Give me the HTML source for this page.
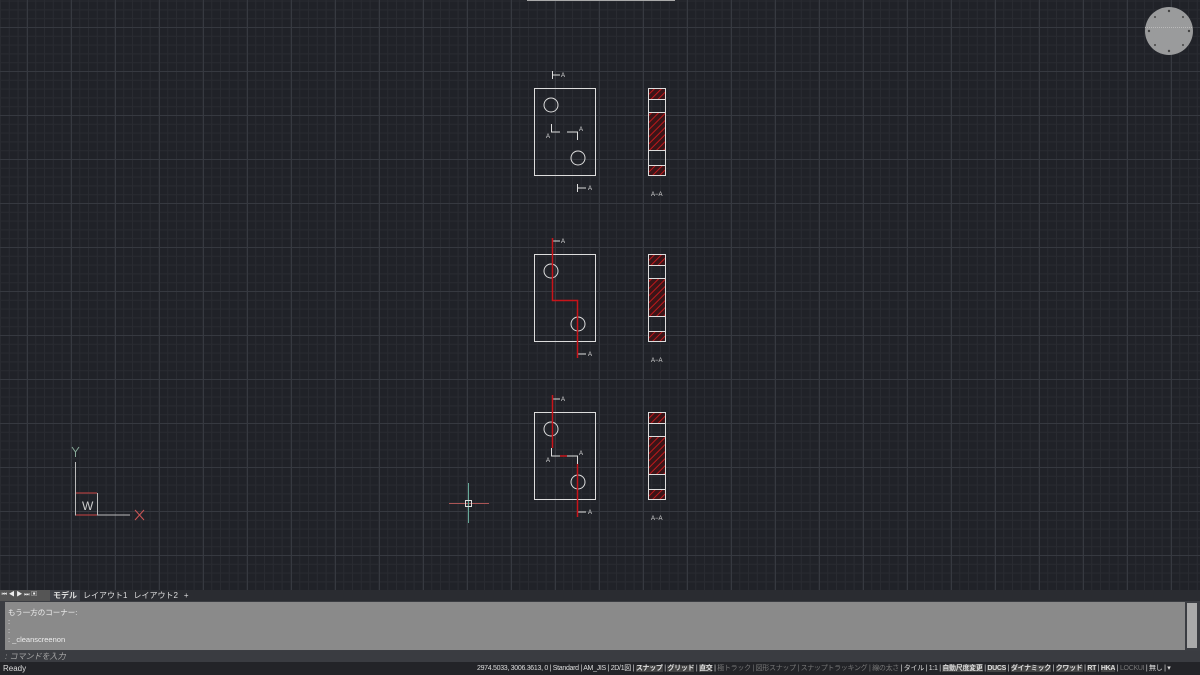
<!DOCTYPE html>
<html><head><meta charset="utf-8"><style>
body{margin:0;width:1200px;height:675px;overflow:hidden;background:#202228;font-family:"Liberation Sans","Noto Sans CJK JP",sans-serif}
.abs{position:absolute}
.tab{display:inline-block;padding:0 3px;height:11px}
</style></head><body>
<svg class="abs" style="left:0;top:0" width="1200" height="590">
<defs>
<pattern id="mn" x="0" y="27" width="8.8" height="8.8" patternUnits="userSpaceOnUse"><path d="M0 0.5H8.8M0.5 0V8.8" stroke="#292b31" stroke-width="1" fill="none"/></pattern>
<pattern id="mj" x="27" y="27" width="44" height="44" patternUnits="userSpaceOnUse"><path d="M0 0.5H44M0.5 0V44" stroke="#363940" stroke-width="1" fill="none"/></pattern>
<pattern id="ht" width="5" height="5" patternUnits="userSpaceOnUse" patternTransform="rotate(45)"><rect width="5" height="5" fill="#3a1518"/><line x1="0" y1="0" x2="0" y2="5" stroke="#c0181c" stroke-width="2"/></pattern>
<g id="sec" fill="none" stroke="#ddd" stroke-width="1">
<rect x="648.5" y="88.5" width="17" height="87"/>
<rect x="649" y="89" width="16" height="10" fill="url(#ht)" stroke="none"/>
<rect x="649" y="113" width="16" height="37" fill="url(#ht)" stroke="none"/>
<rect x="649" y="166" width="16" height="9" fill="url(#ht)" stroke="none"/>
<path d="M648 99.5H666M648 112.5H666M648 150.5H666M648 165.5H666"/>
</g>
<g id="pl" fill="none" stroke="#ddd" stroke-width="1">
<rect x="534.5" y="88.5" width="61" height="87"/>
<circle cx="551" cy="105" r="7"/><circle cx="578" cy="158" r="7"/>
</g>
</defs>
<rect width="1200" height="590" fill="url(#mn)"/>
<rect width="1200" height="590" fill="url(#mj)"/>
<rect x="527" y="0" width="148" height="1" fill="#aaa"/>
<g font-size="6" fill="#ddd" font-family="Liberation Sans">
<use href="#pl"/><use href="#sec"/>
<path d="M552.5 71V79M553 75H560M577.5 184V192M578 188H586" stroke="#ddd" fill="none"/>
<text x="561" y="77">A</text><text x="588" y="190">A</text><text x="651" y="196">A−A</text>
<path d="M551.5 124V132H560M567 132H577.5V140" stroke="#ddd" fill="none"/>
<text x="546" y="138">A</text><text x="579" y="131">A</text>
<g transform="translate(0,166)"><use href="#pl"/><use href="#sec"/><text x="561" y="77">A</text><text x="588" y="190">A</text><text x="651" y="196">A−A</text>
<path d="M553 75H560M578 188H586" stroke="#ddd" fill="none"/>
<path d="M552.5 72V134.5H577.5V192" stroke="#c8141a" stroke-width="1.5" fill="none"/></g>
<g transform="translate(0,324)"><use href="#pl"/><use href="#sec"/><text x="561" y="77">A</text><text x="588" y="190">A</text><text x="651" y="196">A−A</text>
<path d="M553 75H560M578 188H586M551.5 124V132H560M567 132H577.5V140" stroke="#ddd" fill="none"/>
<path d="M552.5 71V124M560 132H567M577.5 140V193" stroke="#c8141a" stroke-width="1.5" fill="none"/>
<text x="546" y="138">A</text><text x="579" y="131">A</text></g>
</g>
<g fill="none" stroke-width="1">
<path d="M75.5 462V515H130" stroke="#bbb"/>
<path d="M76 493H97" stroke="#c44"/><path d="M97.5 493V515" stroke="#bbb"/>
<path d="M76 515H97" stroke="#c44"/>
<path d="M72 447L75.5 452L79 447M75.5 452V457" stroke="#8a9"/>
<path d="M135 510L144 520M144 510L135 520" stroke="#c55"/>
</g>
<text x="82" y="510" font-size="12" fill="#ccc">W</text>
<path d="M449 503.5H489" stroke="#a55" stroke-width="1"/>
<path d="M468.5 483V523" stroke="#6a9" stroke-width="1"/>
<rect x="465.5" y="500.5" width="6" height="6" fill="none" stroke="#ddd"/>
<circle cx="1169" cy="31" r="24" fill="#9a9b9c"/>
<path d="M1145 27.5H1193" stroke="#bbb" stroke-dasharray="1 1"/>
<g fill="#444"><circle cx="1169" cy="11" r="1.2"/><circle cx="1169" cy="51" r="1.2"/><circle cx="1149" cy="31" r="1.2"/><circle cx="1189" cy="31" r="1.2"/><circle cx="1155" cy="17" r="1"/><circle cx="1183" cy="17" r="1"/><circle cx="1155" cy="45" r="1"/><circle cx="1183" cy="45" r="1"/></g>
</svg>
<div class="abs" style="left:0;top:590px;width:1200px;height:11px;background:#2a2c31;font-size:8px;color:#ddd;line-height:11px;white-space:nowrap;display:flex">
<span style="display:inline-block;width:50px;height:11px;background:#555;font-size:6px;line-height:11px;color:#eee">&nbsp;⏮ ◀ ▶ ⏭ ▣</span><span class="tab" style="background:#3e4047;font-weight:bold">モデル</span><span class="tab">レイアウト1</span><span class="tab">レイアウト2</span><span class="tab">+</span>
</div>
<div class="abs" style="left:0;top:601px;width:1200px;height:50px;background:#3b3d42"></div>
<div class="abs" style="left:5px;top:602px;width:1180px;height:48px;background:#8a8a8a;color:#eee;font-size:7.5px;line-height:9px;padding:6px 0 0 3px;box-sizing:border-box">もう一方のコーナー:<br>:<br>:<br>: _cleanscreenon</div>
<div class="abs" style="left:1187px;top:603px;width:10px;height:45px;background:#aaa"></div>
<div class="abs" style="left:0;top:651px;width:1200px;height:11px;background:#3a3c41;color:#aaa;font-size:8px;line-height:11px;padding-left:5px;font-style:italic">: コマンドを入力</div>
<div class="abs" style="left:0;top:662px;width:1200px;height:13px;background:#232428;color:#ddd;font-size:8px;line-height:13px;white-space:nowrap;overflow:hidden"><span style="padding-left:3px">Ready</span>
<span class="abs" style="left:477px;top:0;font-size:7px;letter-spacing:-0.3px">2974.5033, 3006.3613, 0 | Standard | AM_JIS | 2D/1図 | <b style="background:#444">スナップ</b> | <b style="background:#444">グリッド</b> | <b style="background:#444">直交</b> | <span style="color:#777">極トラック | 図形スナップ | スナップトラッキング | 線の太さ</span> | タイル | 1:1 | <b style="background:#444">自動尺度変更</b> | <b style="background:#444">DUCS</b> | <b style="background:#444">ダイナミック</b> | <b style="background:#444">クワッド</b> | <b style="background:#444">RT</b> | <b style="background:#444">HKA</b> | <span style="color:#777">LOCKUI</span> | 無し | ▾</span></div>
</body></html>
